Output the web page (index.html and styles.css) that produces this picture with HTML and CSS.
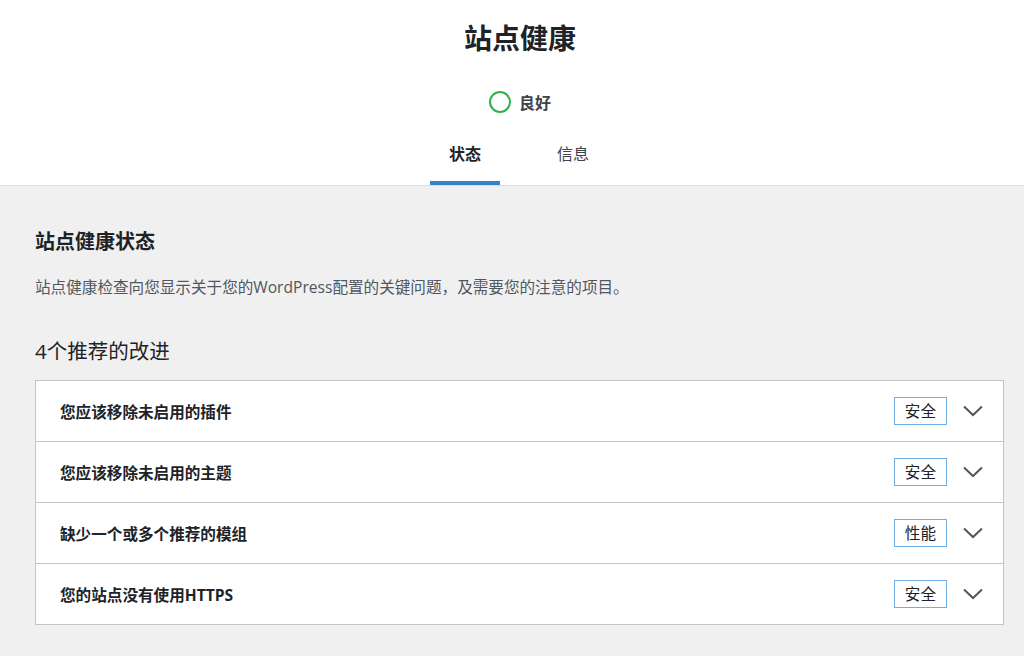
FILE: index.html
```html
<!doctype html>
<html lang="zh-CN">
  <head>
    <meta charset="UTF-8" />
    <title>站点健康</title>
    <link rel="stylesheet" href="styles.css">
  </head>
  <body>
    <div class="health-header">
      <h1 class="health-title">站点健康</h1>
      <div class="health-score">
        <span class="score-ring"></span>
        <span class="score-label">良好</span>
      </div>
      <nav class="health-tabs">
        <a class="health-tab active">状态</a>
        <a class="health-tab">信息</a>
      </nav>
    </div>

    <div class="health-body">
      <h2 class="section-title">站点健康状态</h2>
      <p class="section-desc">站点健康检查向您显示关于您的WordPress配置的关键问题，及需要您的注意的项目。</p>

      <h3 class="issues-count">4个推荐的改进</h3>
      <div class="issues-list">
        <div class="issue-row">
          <span class="issue-name">您应该移除未启用的插件</span>
          <span class="issue-badge">安全</span>
          <svg class="issue-toggle" width="20" height="12" viewBox="0 0 20 12"><path d="M1 1.5 L10 10 L19 1.5" fill="none" stroke="#50575e" stroke-width="2"/></svg>
        </div>
        <div class="issue-row">
          <span class="issue-name">您应该移除未启用的主题</span>
          <span class="issue-badge">安全</span>
          <svg class="issue-toggle" width="20" height="12" viewBox="0 0 20 12"><path d="M1 1.5 L10 10 L19 1.5" fill="none" stroke="#50575e" stroke-width="2"/></svg>
        </div>
        <div class="issue-row">
          <span class="issue-name">缺少一个或多个推荐的模组</span>
          <span class="issue-badge">性能</span>
          <svg class="issue-toggle" width="20" height="12" viewBox="0 0 20 12"><path d="M1 1.5 L10 10 L19 1.5" fill="none" stroke="#50575e" stroke-width="2"/></svg>
        </div>
        <div class="issue-row">
          <span class="issue-name">您的站点没有使用HTTPS</span>
          <span class="issue-badge">安全</span>
          <svg class="issue-toggle" width="20" height="12" viewBox="0 0 20 12"><path d="M1 1.5 L10 10 L19 1.5" fill="none" stroke="#50575e" stroke-width="2"/></svg>
        </div>
      </div>
    </div>
  </body>
</html>
```

FILE: styles.css
```css
body {
  margin: 0;
  padding: 0;
  background: #f0f0f1;
  color: #1d2327;
  font-family: "Open Sans", "Noto Sans CJK SC", sans-serif;
}

/* ヘッダー */
.health-header {
  background: #fff;
  border-bottom: 1px solid #dcdcde;
  text-align: center;
  padding-left: 16px;
}

.health-title {
  margin: 0;
  padding-top: 18px;
  font-size: 28px;
  font-weight: 700;
  line-height: 40px;
  color: #1d2327;
}

.health-score {
  display: flex;
  justify-content: center;
  align-items: center;
  gap: 8px;
  margin-top: 24px;
  height: 40px;
}

.score-ring {
  width: 18px;
  height: 18px;
  border: 2px solid #2bb24c;
  border-radius: 50%;
}

.score-label {
  font-size: 16px;
  font-weight: 700;
  color: #3c434a;
}

.health-tabs {
  display: flex;
  justify-content: center;
  gap: 38px;
  margin-top: 8px;
  padding-right: 2px;
}

.health-tab {
  display: block;
  width: 70px;
  padding: 13px 0 16px;
  font-size: 16px;
  color: #3c434a;
  border-bottom: 4px solid transparent;
  line-height: 22px;
}

.health-tab.active {
  font-weight: 700;
  color: #1d2327;
  border-bottom-color: #3582c4;
}

/* 本文 */
.health-body {
  padding: 28px 20px 40px 35px;
}

.section-title {
  margin: 0;
  font-size: 20px;
  font-weight: 700;
  line-height: 56px;
}

.section-desc {
  margin: 0;
  font-size: 15.6px;
  line-height: 34px;
  color: #50575e;
}

.issues-count {
  margin: 32px 0 14px;
  font-size: 20.5px;
  font-weight: 400;
  line-height: 30px;
  color: #1d2327;
}

.issues-list {
  background: #fff;
  border: 1px solid #c3c4c7;
}

.issue-row {
  display: flex;
  align-items: center;
  height: 60px;
  padding: 0 20px 0 24px;
  border-bottom: 1px solid #c3c4c7;
}

.issue-row:last-child {
  border-bottom: none;
}

.issue-name {
  flex: 1;
  font-size: 15.6px;
  font-weight: 700;
  color: #1d2327;
}

.issue-badge {
  padding: 2px 10px;
  font-size: 15.6px;
  line-height: 22px;
  border: 1px solid #72aee6;
  color: #1d2327;
  margin-right: 16px;
}

.issue-toggle {
  display: block;
}
```
